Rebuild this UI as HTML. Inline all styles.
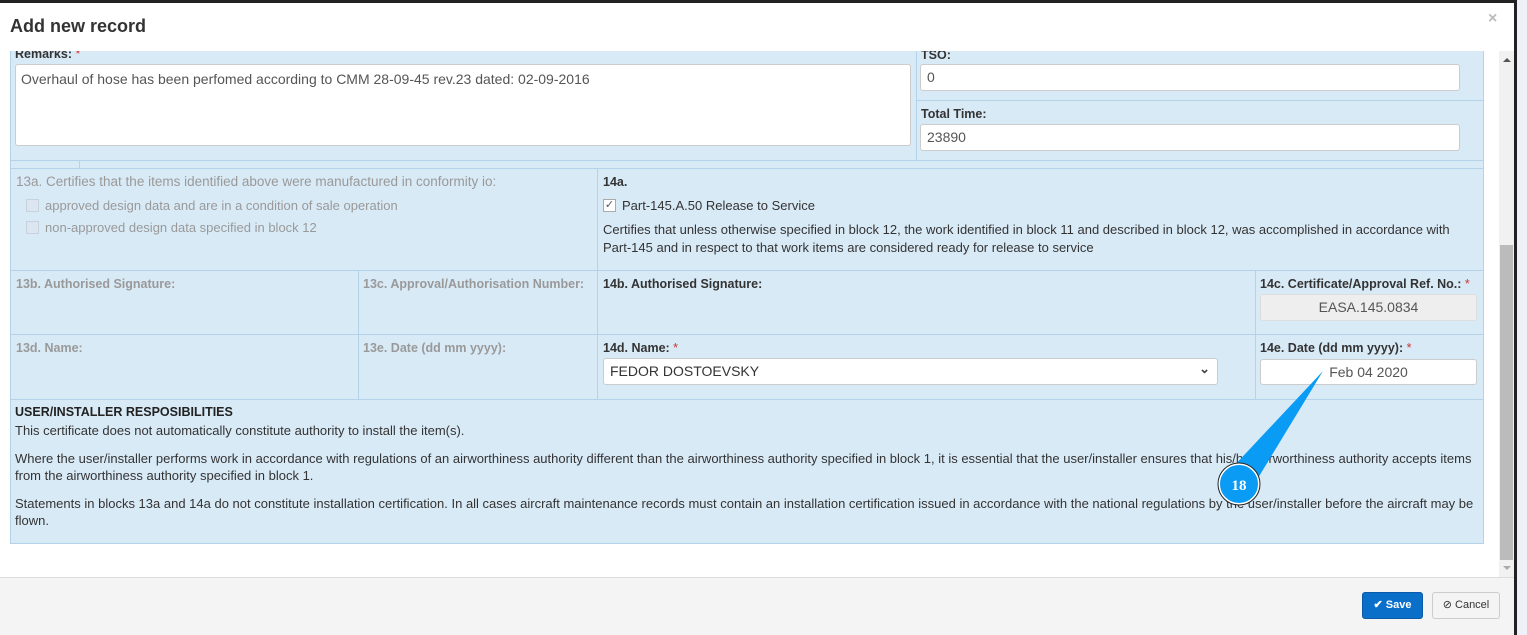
<!DOCTYPE html>
<html><head><meta charset="utf-8"><style>
*{box-sizing:border-box;margin:0;padding:0}
body{width:1527px;height:635px;background:#eef2f8;font-family:"Liberation Sans",Arial,sans-serif;font-size:13px;color:#333;position:relative;overflow:hidden}
.a{position:absolute}
.modal{left:0;top:0;width:1517px;height:635px;background:#fff;border-top:3px solid #222;border-right:3px solid #222}
.title{left:10px;top:16px;font-size:18px;font-weight:bold;color:#333}
.x{left:1488px;top:10px;font-size:16px;color:#bbb;font-weight:bold}
.panel{left:10px;top:51px;width:1474px;height:493px;background:#d9eaf7;border:1px solid #b4d2ea;border-top:none}
.hl{height:1px;background:#b4d2ea}
.vl{width:1px;background:#b4d2ea}
.inp{background:#fff;border:1px solid #ccc;border-radius:3px;font-size:13px;padding:6px 6px;color:#555}
.lbl{font-weight:bold;color:#333;font-size:12.5px}
.g{color:#999}
.req{color:#c33;font-weight:normal}
.cb{width:13px;height:13px;border:1px solid #c8d2dc;background:#dbe6f0}
.foot{left:0;top:577px;width:1514px;height:58px;background:#f4f4f4;border-top:1px solid #ddd}
</style></head><body>
<div class="a modal"></div>
<div class="a title">Add new record</div>
<div class="a x">×</div>
<div class="a panel"></div>
<div class="a lbl" style="left:15px;top:47px;">Remarks: <span class="req">*</span></div>
<div class="a" style="left:0;top:44px;width:1514px;height:7px;background:#fff"></div>
<div class="a inp" style="left:15px;top:64px;width:896px;height:82px;padding:6px 5px;font-size:14px">Overhaul of hose has been perfomed according to CMM 28-09-45 rev.23 dated: 02-09-2016</div>
<div class="a vl" style="left:916px;top:51px;height:109px"></div>
<div class="a lbl" style="left:921px;top:48px;">TSO:</div>
<div class="a" style="left:916px;top:44px;width:570px;height:7px;background:#fff"></div>
<div class="a inp" style="left:920px;top:64px;width:540px;height:27px;font-size:14px;padding:4px 6px">0</div>
<div class="a hl" style="left:916px;top:100px;width:568px"></div>
<div class="a lbl" style="left:921px;top:107px;">Total Time:</div>
<div class="a inp" style="left:920px;top:124px;width:540px;height:27px;font-size:14px;padding:4px 6px">23890</div>
<div class="a hl" style="left:10px;top:160px;width:1474px"></div>
<div class="a vl" style="left:79px;top:160px;height:8px"></div>
<div class="a hl" style="left:10px;top:168px;width:1474px"></div>
<div class="a g" style="left:16px;top:174px;font-size:13.5px">13a. Certifies that the items identified above were manufactured in conformity io:</div>
<div class="a cb" style="left:26px;top:199px"></div>
<div class="a g" style="left:45px;top:198px">approved design data and are in a condition of sale operation</div>
<div class="a cb" style="left:26px;top:221px"></div>
<div class="a g" style="left:45px;top:220px">non-approved design data specified in block 12</div>
<div class="a vl" style="left:597px;top:168px;height:231px"></div>
<div class="a lbl" style="left:603px;top:175px">14a.</div>
<div class="a cb" style="left:603px;top:199px;background:#fff;border-color:#aaa;font-size:11px;line-height:11px;color:#555;text-align:center">✓</div>
<div class="a" style="left:622px;top:198px">Part-145.A.50 Release to Service</div>
<div class="a" style="left:603px;top:221px;width:870px;line-height:18px">Certifies that unless otherwise specified in block 12, the work identified in block 11 and described in block 12, was accomplished in accordance with Part-145 and in respect to that work items are considered ready for release to service</div>
<div class="a hl" style="left:10px;top:270px;width:1474px"></div>
<div class="a lbl" style="left:16px;top:277px;color:#999">13b. Authorised Signature:</div>
<div class="a vl" style="left:358px;top:270px;height:129px"></div>
<div class="a lbl" style="left:363px;top:277px;color:#999">13c. Approval/Authorisation Number:</div>
<div class="a lbl" style="left:603px;top:277px">14b. Authorised Signature:</div>
<div class="a vl" style="left:1255px;top:270px;height:129px"></div>
<div class="a lbl" style="left:1260px;top:277px">14c. Certificate/Approval Ref. No.: <span class="req">*</span></div>
<div class="a inp" style="left:1260px;top:294px;width:217px;height:27px;background:#eee;text-align:center;border-color:#ddd;font-size:14px;padding:4px">EASA.145.0834</div>
<div class="a hl" style="left:10px;top:334px;width:1474px"></div>
<div class="a lbl" style="left:16px;top:341px;color:#999">13d. Name:</div>
<div class="a lbl" style="left:363px;top:341px;color:#999">13e. Date (dd mm yyyy):</div>
<div class="a lbl" style="left:603px;top:341px">14d. Name: <span class="req">*</span></div>
<div class="a inp" style="left:603px;top:358px;width:615px;height:27px;color:#333;font-size:14px;padding:4px 6px">FEDOR DOSTOEVSKY<span style="position:absolute;right:7px;top:2px;font-size:13px;font-weight:bold;color:#444">&#8964;</span></div>
<div class="a lbl" style="left:1260px;top:341px">14e. Date (dd mm yyyy): <span class="req">*</span></div>
<div class="a inp" style="left:1260px;top:359px;width:217px;height:26px;text-align:center;font-size:14px;padding:4px">Feb 04 2020</div>
<div class="a hl" style="left:10px;top:399px;width:1474px"></div>
<div class="a lbl" style="left:15px;top:405px;color:#222">USER/INSTALLER RESPOSIBILITIES</div>
<div class="a" style="left:15px;top:423px">This certificate does not automatically constitute authority to install the item(s).</div>
<div class="a" style="left:15px;top:450px;width:1462px;line-height:17px">Where the user/installer performs work in accordance with regulations of an airworthiness authority different than the airworthiness authority specified in block 1, it is essential that the user/installer ensures that his/her airworthiness authority accepts items from the airworthiness authority specified in block 1.</div>
<div class="a" style="left:15px;top:495px;width:1462px;line-height:17px">Statements in blocks 13a and 14a do not constitute installation certification. In all cases aircraft maintenance records must contain an installation certification issued in accordance with the national regulations by the user/installer before the aircraft may be flown.</div>
<div class="a" style="left:1499px;top:51px;width:15px;height:526px;background:#f1f1f1"></div>
<div class="a" style="left:1500px;top:245px;width:13px;height:315px;background:#bbb"></div>
<div class="a" style="left:1503px;top:58px;width:0;height:0;border-left:4px solid transparent;border-right:4px solid transparent;border-bottom:4px solid #555"></div>
<div class="a" style="left:1503px;top:566px;width:0;height:0;border-left:4px solid transparent;border-right:4px solid transparent;border-top:4px solid #aaa"></div>
<div class="a foot"></div>
<div class="a" style="left:1362px;top:592px;width:61px;height:27px;background:#0a6fc9;border:1px solid #0a5aa8;border-radius:3px;color:#fff;font-weight:bold;font-size:11px;line-height:25px;text-align:center">✔ Save</div>
<div class="a" style="left:1432px;top:592px;width:68px;height:27px;background:#f4f4f4;border:1px solid #ccc;border-radius:3px;color:#333;font-size:11px;line-height:25px;text-align:center">⊘ Cancel</div>
<svg class="a" style="left:0;top:0" width="1527" height="635">
<polygon points="1323,371 1232,468 1258,478" fill="#0a9bf5"/>
<circle cx="1239" cy="484" r="20" fill="#0a9bf5" stroke="#fff" stroke-width="2"/>
<circle cx="1239" cy="484" r="21" fill="none" stroke="#222" stroke-width="1"/>
<text x="1239" y="490" text-anchor="middle" fill="#fff" font-family="Liberation Serif,serif" font-weight="bold" font-size="15">18</text>
</svg>
</body></html>
